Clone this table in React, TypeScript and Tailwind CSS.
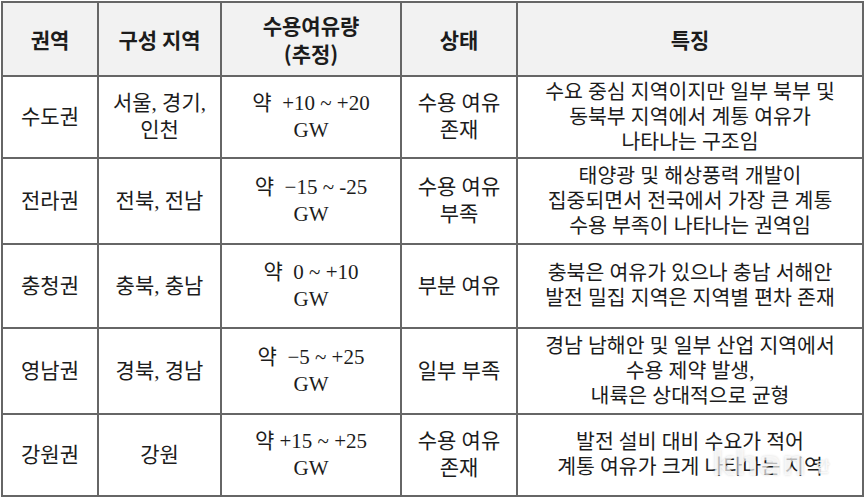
import React from "react";

const body = "font-['Liberation_Serif','Noto_Sans_CJK_KR',serif] text-[#1c1c1c]";
const head = "font-['Noto_Sans_CJK_KR',sans-serif] font-bold text-[21px] text-[#1c1c1c] leading-[28px]";

type Row = { h: string; a: string[]; b: string[]; c: string[]; d: string[]; e: string[] };

const rows: Row[] = [
  {
    h: "h-[80px]",
    a: ["수도권"],
    b: ["서울, 경기,", "인천"],
    c: ["약  +10 ~ +20", "GW"],
    d: ["수용 여유", "존재"],
    e: ["수요 중심 지역이지만 일부 북부 및", "동북부 지역에서 계통 여유가", "나타나는 구조임"],
  },
  {
    h: "h-[84px]",
    a: ["전라권"],
    b: ["전북, 전남"],
    c: ["약  −15 ~ -25", "GW"],
    d: ["수용 여유", "부족"],
    e: ["태양광 및 해상풍력 개발이", "집중되면서 전국에서 가장 큰 계통", "수용 부족이 나타나는 권역임"],
  },
  {
    h: "h-[82px]",
    a: ["충청권"],
    b: ["충북, 충남"],
    c: ["약  0 ~ +10", "GW"],
    d: ["부분 여유"],
    e: ["충북은 여유가 있으나 충남 서해안", "발전 밀집 지역은 지역별 편차 존재"],
  },
  {
    h: "h-[84px]",
    a: ["영남권"],
    b: ["경북, 경남"],
    c: ["약  −5 ~ +25", "GW"],
    d: ["일부 부족"],
    e: ["경남 남해안 및 일부 산업 지역에서", "수용 제약 발생,", "내륙은 상대적으로 균형"],
  },
  {
    h: "h-[80px]",
    a: ["강원권"],
    b: ["강원"],
    c: ["약 +15 ~ +25", "GW"],
    d: ["수용 여유", "존재"],
    e: ["발전 설비 대비 수요가 적어", "계통 여유가 크게 나타나는 지역"],
  },
];

function Cell({ lines, cls, h }: { lines: string[]; cls: string; h: string }) {
  return (
    <div className={`bg-white flex flex-col items-center justify-center text-center ${h} ${body} ${cls}`}>
      {lines.map((l, i) => (
        <div key={i} className="whitespace-pre">{l}</div>
      ))}
    </div>
  );
}

export default function App() {
  return (
    <div className="w-[865px] h-[498px] bg-white relative overflow-hidden">
      <div className="ml-[1px] mt-[1px] w-[863px] bg-[#666666] p-[2px] grid grid-cols-[94px_121px_178px_114px_344px] gap-[2px]">
        {["권역", "구성 지역", "수용여유량\n(추정)", "상태", "특징"].map((t, i) => (
          <div key={i} className={`h-[72px] bg-[#f2f2f2] flex flex-col items-center justify-center text-center ${head}`}>
            {t.split("\n").map((l, j) => (
              <div key={j}>{l}</div>
            ))}
          </div>
        ))}
        {rows.map((r, i) => (
          <React.Fragment key={i}>
            <Cell lines={r.a} cls="text-[21px] leading-[27px]" h={r.h} />
            <Cell lines={r.b} cls="text-[21px] leading-[27px]" h={r.h} />
            <Cell lines={r.c} cls="text-[21px] leading-[27px]" h={r.h} />
            <Cell lines={r.d} cls="text-[21px] leading-[27px]" h={r.h} />
            <Cell lines={r.e} cls="text-[20.5px] leading-[25px]" h={r.h} />
          </React.Fragment>
        ))}
      </div>
      <div className="absolute left-[712px] top-[446px] flex items-end gap-[10px] pointer-events-none">
        <span className="font-['DejaVu_Sans',sans-serif] font-bold text-[34px] leading-[34px] text-white/70 [text-shadow:0_0_3px_rgba(0,0,0,0.15)]">khan</span>
        <span className="font-['Noto_Sans_CJK_KR',sans-serif] font-bold text-[15px] leading-[28px] text-white/80 [text-shadow:0_0_2px_rgba(0,0,0,0.2)]">칸</span>
      </div>
    </div>
  );
}
